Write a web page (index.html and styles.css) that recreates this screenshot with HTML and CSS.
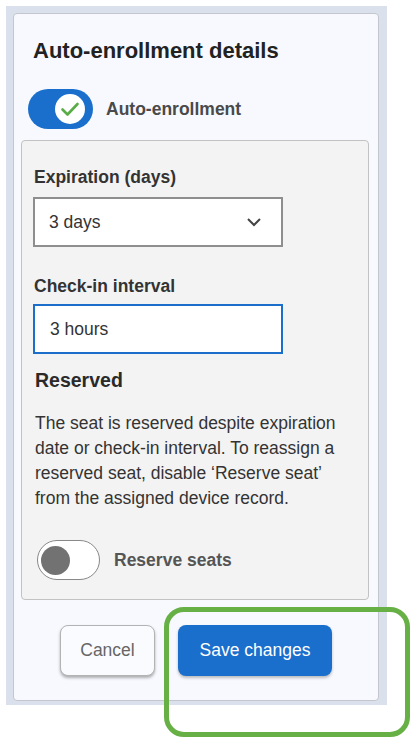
FILE: index.html
```html
<!DOCTYPE html>
<html>
<head>
<meta charset="utf-8">
<link rel="stylesheet" href="styles.css">
</head>
<body>
<div class="frame">
  <div class="card">
    <h1 class="title">Auto-enrollment details</h1>
    <div class="toggle-row">
      <span class="switch switch-on">
        <span class="knob knob-on">
          <svg width="20" height="16" viewBox="0 0 20 16"><path d="M2.5 7.5 L7.5 12.5 L17.5 2" fill="none" stroke="#5aac46" stroke-width="2.6" stroke-linecap="round" stroke-linejoin="round"/></svg>
        </span>
      </span>
      <span class="toggle-label">Auto-enrollment</span>
    </div>
    <div class="panel">
      <div class="field-label">Expiration (days)</div>
      <div class="select">
        <span>3 days</span>
        <svg class="chevron" width="16" height="10" viewBox="0 0 16 10"><path d="M2 2 L8 8 L14 2" fill="none" stroke="#444" stroke-width="2"/></svg>
      </div>
      <div class="field-label label-2">Check-in interval</div>
      <div class="input">3 hours</div>
      <h2 class="subhead">Reserved</h2>
      <p class="desc">The seat is reserved despite expiration date or check-in interval. To reassign a reserved seat, disable ‘Reserve seat’ from the assigned device record.</p>
      <div class="toggle-row reserve-row">
        <span class="switch switch-off"><span class="knob knob-off"></span></span>
        <span class="toggle-label">Reserve seats</span>
      </div>
    </div>
    <div class="actions">
      <button class="btn btn-cancel">Cancel</button>
      <button class="btn btn-save">Save changes</button>
    </div>
  </div>
</div>
<div class="highlight"></div>
</body>
</html>
```
FILE: styles.css
```css
html, body {
  margin: 0;
  padding: 0;
  background: #ffffff;
}
body {
  font-family: "Liberation Sans", Arial, sans-serif;
  position: relative;
  width: 416px;
  height: 747px;
  overflow: hidden;
}
.frame {
  margin: 6px 0 0 6px;
  width: 381px;
  box-sizing: border-box;
  padding: 7px 8px 4px 7px;
  background: #dae1ec;
}
.card {
  background: #f7f9fe;
  border: 1px solid #c3c6cc;
  border-radius: 4px;
  padding: 24px 0 24px 0;
}
.title {
  margin: 0 0 0 19px;
  font-size: 22px;
  line-height: 26px;
  font-weight: bold;
  color: #222;
}
.toggle-row {
  display: flex;
  align-items: center;
  margin: 25px 0 0 14px;
}
.switch {
  display: flex;
  align-items: center;
  box-sizing: border-box;
  width: 65px;
  height: 40px;
  border-radius: 20px;
  flex: none;
}
.switch-on {
  background: #1a6fcc;
  justify-content: flex-end;
  padding-right: 8px;
}
.knob {
  width: 30px;
  height: 30px;
  border-radius: 50%;
  display: flex;
  align-items: center;
  justify-content: center;
}
.knob-on {
  background: #ffffff;
}
.knob-on svg {
  margin-top: 1px;
}
.toggle-label {
  margin-left: 13px;
  font-size: 17.5px;
  line-height: 20px;
  font-weight: bold;
  color: #4a4a4a;
}
.panel {
  margin: 11px 9px 0 7px;
  background: #f3f3f3;
  border: 1px solid #c2c2c2;
  border-radius: 4px;
  padding: 26px 12px 19px 11px;
}
.field-label {
  font-size: 17.5px;
  line-height: 20px;
  font-weight: bold;
  color: #333;
  margin-left: 1px;
}
.label-2 {
  margin-top: 29px;
}
.select, .input {
  box-sizing: border-box;
  width: 250px;
  height: 50px;
  background: #fff;
  display: flex;
  align-items: center;
  font-size: 17.5px;
  line-height: 20px;
  color: #333;
}
.select {
  margin-top: 10px;
  border: 2px solid #8e8e8e;
  padding: 0 19px 0 14px;
  justify-content: space-between;
}
.input {
  margin-top: 8px;
  border: 2px solid #1b6fca;
  padding: 0 15px;
}
.subhead {
  margin: 14px 0 0 2px;
  font-size: 19.5px;
  line-height: 24px;
  font-weight: bold;
  color: #2a2a2a;
}
.desc {
  margin: 19px 0 0 2px;
  width: 320px;
  font-size: 17.5px;
  line-height: 25px;
  color: #333;
}
.reserve-row {
  margin: 29px 0 0 4px;
}
.switch-off {
  width: 63px;
  background: #fff;
  border: 1.5px solid #888;
  padding-left: 3px;
}
.knob-off {
  width: 29px;
  height: 29px;
  background: #727272;
}
.reserve-row .toggle-label {
  margin-left: 14px;
  color: #555;
}
.actions {
  display: flex;
  justify-content: center;
  gap: 23px;
  margin-top: 25px;
}
.btn {
  font-family: "Liberation Sans", Arial, sans-serif;
  font-size: 17.5px;
  height: 51px;
  border-radius: 8px;
  box-sizing: border-box;
  cursor: pointer;
}
.btn-cancel {
  width: 95px;
  background: #fafbfe;
  color: #666;
  border: 1px solid #b3b3b3;
  box-shadow: 0 2px 3px rgba(0, 0, 0, 0.3);
}
.btn-save {
  width: 154px;
  background: #1a6ecc;
  color: #fff;
  border: none;
  box-shadow: 0 2px 3px rgba(0, 0, 0, 0.25);
}
.highlight {
  position: absolute;
  left: 164px;
  top: 607px;
  width: 246px;
  height: 130px;
  box-sizing: border-box;
  border: 5px solid #67b045;
  border-radius: 20px;
}
```
